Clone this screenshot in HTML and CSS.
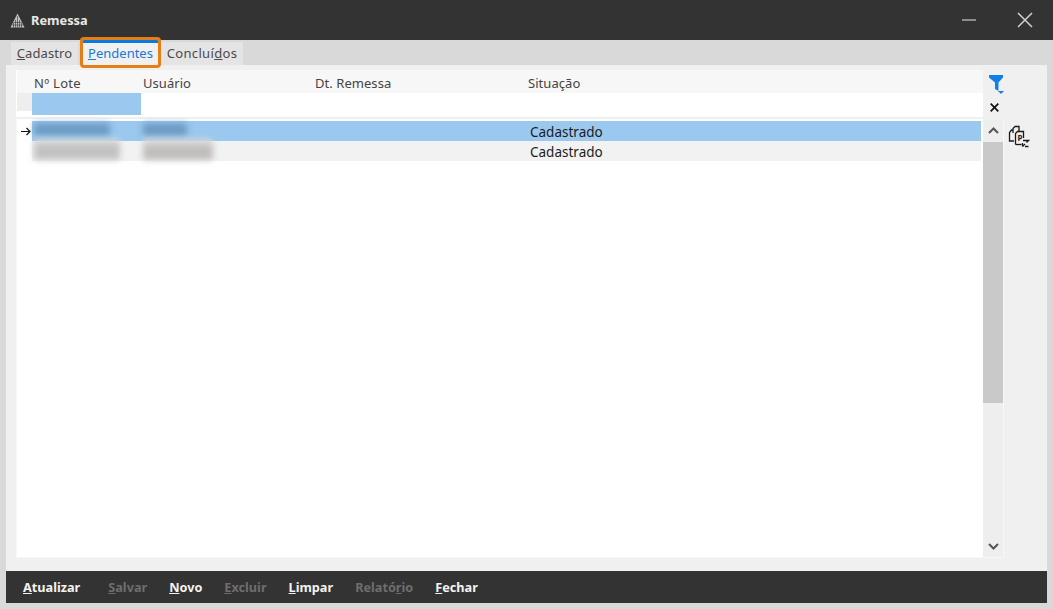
FILE: index.html
```html
<!DOCTYPE html>
<html lang="pt">
<head>
<meta charset="utf-8">
<title>Remessa</title>
<link rel="stylesheet" href="styles.css">
</head>
<body>
<div class="window">
  <header class="titlebar">
    <div class="title">
      <svg class="logo" width="15" height="15" viewBox="0 0 15 15"><path d="M7.5 .5 L14.5 14.5 H.5 Z" fill="#c4c4c4"/><path d="M7.5 3V14.5M5.5 7V14.5M9.5 7V14.5M3.5 10V14.5M11.5 10V14.5M2 12H13M3.5 9.5H11.5" stroke="#333" stroke-width=".6" fill="none"/></svg>
      <span>Remessa</span>
    </div>
    <div class="win-controls">
      <svg width="14" height="14" viewBox="0 0 14 14"><path d="M0 7H14" stroke="#b5b5b5" stroke-width="1.4"/></svg>
      <svg width="16" height="16" viewBox="0 0 16 16"><path d="M1 1L15 15M15 1L1 15" stroke="#d0d0d0" stroke-width="1.5"/></svg>
    </div>
  </header>
  <nav class="tabs">
    <div class="tab t1"><u>C</u>adastro</div>
    <div class="tab active"><u>P</u>endentes</div>
    <div class="tab t3">Concluí<u>d</u>os</div>
  </nav>
  <main class="panel">
    <div class="top">
      <div class="grid-head">
        <div class="row header">
          <span></span><span class="pad3">Nº Lote</span><span class="pad2">Usuário</span><span class="pad2">Dt. Remessa</span><span class="pad1">Situação</span>
        </div>
        <div class="row filter">
          <span class="ind"></span><span class="filter-cell"></span>
        </div>
      </div>
      <div class="tools-top">
        <svg width="16" height="20" viewBox="0 0 16 20"><path d="M0 1H14V3.5L9.5 8.5V17L6 15V8.5L0 3.5Z" fill="#1080e8"/><path d="M9 17H15L12 20Z" fill="#1080e8"/></svg>
        <svg class="clear" width="9" height="9" viewBox="0 0 9 9"><path d="M.7 .7L8.3 8.3M8.3 .7L.7 8.3" stroke="#111" stroke-width="1.7"/></svg>
      </div>
    </div>
    <div class="bottom">
      <div class="list-frame">
        <div class="list">
          <div class="row data selected">
            <span class="arrow"><svg width="10" height="9" viewBox="0 0 10 9"><path d="M0 4.5H9M5.5 1L9 4.5L5.5 8" stroke="#111" stroke-width="1.2" fill="none"/></svg></span>
            <span><i class="blur b1"></i></span><span><i class="blur b2"></i></span><span></span><span class="sit">Cadastrado</span>
          </div>
          <div class="row data alt">
            <span></span>
            <span><i class="blur b3"></i></span><span><i class="blur b4"></i></span><span></span><span class="sit">Cadastrado</span>
          </div>
        </div>
        <div class="scrollbar">
          <div class="sbtn"><svg width="11" height="7" viewBox="0 0 11 7"><path d="M1 6L5.5 1.5L10 6" stroke="#555" stroke-width="2" fill="none"/></svg></div>
          <div class="track"><div class="thumb"></div></div>
          <div class="sbtn low"><svg width="11" height="7" viewBox="0 0 11 7"><path d="M1 1L5.5 5.5L10 1" stroke="#555" stroke-width="2" fill="none"/></svg></div>
        </div>
      </div>
      <div class="tools-side">
        <svg width="22" height="23" viewBox="0 0 22 23" fill="none" stroke="#1a1a1a" stroke-width="1.3"><path d="M5 5H3.5L1.5 7.5V16H6"/><path d="M5 8V3.5L7 1.5H11V6"/><path d="M7.5 19.5V8.5L9.5 6.5H15.5V13"/><path d="M7.5 19.5H13.5"/><text class="p-mark" x="9.5" y="16">P</text><path d="M15 15.5H20.5L18.5 17.5M14.5 21.5L17 19M14.5 21.5V18M20.5 21.5H17" stroke-width="1.3"/></svg>
      </div>
    </div>
  </main>
  <footer class="actions">
    <span class="act first"><u>A</u>tualizar</span>
    <span class="act off"><u>S</u>alvar</span>
    <span class="act"><u>N</u>ovo</span>
    <span class="act off"><u>E</u>xcluir</span>
    <span class="act"><u>L</u>impar</span>
    <span class="act off">Relató<u>r</u>io</span>
    <span class="act"><u>F</u>echar</span>
  </footer>
</div>
</body>
</html>
```

FILE: styles.css
```css
* { box-sizing: border-box; }
html, body { margin: 0; height: 100%; }
body { background: #d9d9d9; font-family: "Noto Sans", sans-serif; font-size: 13px; color: #222; overflow: hidden; }
.window { width: 1053px; height: 609px; display: flex; flex-direction: column; }

.titlebar { height: 40px; flex: none; background: #333; color: #fff; display: flex; align-items: center; justify-content: space-between; padding: 0 20px 0 10px; }
.title { display: flex; align-items: center; gap: 6px; font-weight: 700; font-size: 12.8px; color: #e8e8e8; }
.win-controls { display: flex; align-items: center; gap: 41px; }

.tabs { height: 25px; flex: none; display: flex; padding: 2px 0 0 11px; }
.tab { height: 23px; background: #e4e4e4; color: #4a4a4a; display: flex; align-items: center; justify-content: center; padding-bottom: 2px; }
.t1 { width: 67px; letter-spacing: .1px; }
.t3 { width: 82px; margin-left: 3px; letter-spacing: .35px; }
.active { width: 75px; margin-left: 5px; margin-top: -2px; height: 25px; background: #f0f0f0; color: #1a78d6; border-top: 3px solid #0a78dc; outline: 3px solid #e67e17; border-radius: 1px; padding-bottom: 3px; position: relative; z-index: 1; }

.panel { margin: 0 6px; flex: 1; background: #f0f0f0; padding: 5px 0 13px 10px; display: flex; flex-direction: column; min-height: 0; }
.top { display: flex; flex: none; height: 49px; }
.grid-head { width: 967px; height: 47px; border-left: 1px solid #fff; }
.row { display: grid; grid-template-columns: 15px 109px 172px 214px 1fr; }
.header { height: 23px; background: #f7f7f7; color: #444; align-items: center; padding-top: 2px; letter-spacing: .05px; }
.pad3 { padding-left: 2px; letter-spacing: .3px; }
.pad2 { padding-left: 2px; }
.pad1 { padding-left: 1px; }
.filter { height: 24px; background: #fff; }
.ind { background: #eee; height: 18px; }
.filter-cell { background: #9ac8ef; height: 22px; }
.tools-top { display: flex; flex-direction: column; align-items: flex-start; padding: 4px 0 0 6px; gap: 9px; }
.clear { margin-left: 1px; }

.bottom { flex: 1; display: flex; min-height: 0; }
.list-frame { width: 988px; display: flex; background: #fff; border: 1px solid #f7f7f7; border-top: 0; padding-top: 2px; }
.list { width: 964px; }
.data { height: 20px; align-items: center; color: #1c1c1c; font-size: 13.5px; }
.selected { background: #9ac8ef; }
.alt { background: #f2f2f2; }
.arrow { display: flex; align-items: center; justify-content: center; padding-left: 2px; height: 100%; background: #fff; }
.alt > span:first-child { height: 100%; background: #fff; }
.sit { padding: 2px 0 0 3px; line-height: 18px; }
.blur { display: block; filter: blur(3px); border-radius: 2px; }
.b1 { width: 76px; height: 13px; margin: -3px 0 0 2px; background: #6e9cc4; }
.b2 { width: 44px; height: 13px; margin: -3px 0 0 2px; background: #6e9cc4; }
.b3 { width: 86px; height: 21px; margin: -3px 0 0 2px; background: linear-gradient(#dedede, #bfbfbf 45%, #c6c6c6); }
.b4 { width: 70px; height: 21px; margin: -3px 0 0 2px; background: linear-gradient(#dedede, #c0bcbc 50%, #c2bebe); }

.scrollbar { flex: 1; background: #eee; display: flex; flex-direction: column; border-left: 2px solid #fff; margin-top: -2px; }
.sbtn { height: 23px; flex: none; display: flex; align-items: center; justify-content: center; }
.low { height: 21px; }
.track { flex: 1; }
.thumb { height: 261px; background: #c9c9c9; }
.tools-side { padding: 6px 0 0 4px; }
.p-mark { font-family: "Noto Sans", sans-serif; font-size: 8px; font-weight: 700; fill: #222; stroke: none; }

.actions { margin: 0 6px 6px; height: 32px; flex: none; background: #333; display: flex; align-items: center; padding-left: 17px; gap: 22px; font-weight: 700; color: #f2f2f2; font-size: 12.7px; }
.first { margin-right: 6px; }
.off { color: #6e6e6e; }
```
